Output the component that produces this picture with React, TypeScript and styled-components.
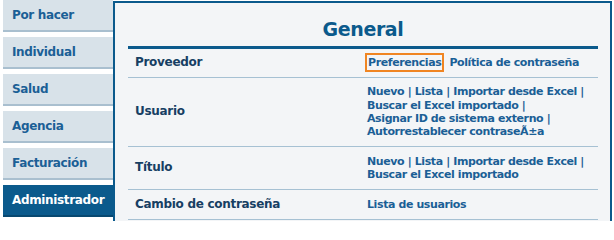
import styled, { createGlobalStyle } from 'styled-components';

const colors = {
  blue: '#1b5f96',
  navy: '#0b5a8c',
  tabBg: '#d8e2e9',
  tabEdge: '#a9bfcf',
  panelBg: '#f3f5f7',
  line: '#a6c1d3',
  focus: '#f08522',
};

const tabs = ['Por hacer', 'Individual', 'Salud', 'Agencia', 'Facturación', 'Administrador'];
const activeTab = 'Administrador';

interface Section {
  label: string;
  height: number;
  links: string[];
}

const sections: Section[] = [
  {
    label: 'Usuario',
    height: 68,
    links: [
      'Nuevo | Lista | Importar desde Excel |',
      'Buscar el Excel importado |',
      'Asignar ID de sistema externo |',
      'Autorrestablecer contraseÃ±a',
    ],
  },
  {
    label: 'Título',
    height: 42,
    links: ['Nuevo | Lista | Importar desde Excel |', 'Buscar el Excel importado'],
  },
  { label: 'Cambio de contraseña', height: 29, links: ['Lista de usuarios'] },
];

const GlobalStyle = createGlobalStyle`
  html, body {
    margin: 0;
    padding: 0;
    background: #ffffff;
  }
  body {
    font-family: "DejaVu Sans", Verdana, sans-serif;
    font-weight: bold;
  }
`;

export default function App() {
  return (
    <>
      <GlobalStyle />
      <Page>
        <Nav>
          {tabs.map((t) => (
            <Tab key={t} $active={t === activeTab}>
              {t}
            </Tab>
          ))}
        </Nav>
        <Panel>
          <Title>General</Title>
          <Table>
            <tbody>
              <Row>
                <Label $h={28}>Proveedor</Label>
                <Links>
                  <Focused>Preferencias</Focused>
                  <span>Política de contraseña</span>
                </Links>
              </Row>
              {sections.map((s) => (
                <Row key={s.label}>
                  <Label $h={s.height}>{s.label}</Label>
                  <Links>
                    {s.links.map((line, i) => (
                      <div key={i}>{line}</div>
                    ))}
                  </Links>
                </Row>
              ))}
            </tbody>
          </Table>
        </Panel>
      </Page>
    </>
  );
}

const Page = styled.div`
  display: flex;
  flex-direction: row;
  width: 614px;
  height: 221px;
  overflow: hidden;
`;

const Nav = styled.div`
  display: flex;
  flex-direction: column;
  width: 110px;
  padding-left: 3px;
  gap: 5px;
  flex-shrink: 0;
`;

const Tab = styled.div<{ $active?: boolean }>`
  height: 30px;
  line-height: 30px;
  padding-left: 9px;
  font-size: 12px;
  letter-spacing: -0.35px;
  white-space: nowrap;
  color: ${(p) => (p.$active ? '#ffffff' : colors.blue)};
  background: ${(p) => (p.$active ? colors.navy : colors.tabBg)};
  border-bottom: 2px solid ${(p) => (p.$active ? '#084870' : colors.tabEdge)};
`;

const Panel = styled.div`
  width: 499px;
  height: 240px;
  margin-top: 1px;
  border: 2px solid ${colors.navy};
  background: ${colors.panelBg};
  padding: 0 12px 0 13px;
  box-sizing: border-box;
`;

const Title = styled.div`
  height: 43px;
  line-height: 52px;
  text-align: center;
  font-size: 19px;
  letter-spacing: -0.4px;
  color: ${colors.navy};
  border-bottom: 3px solid ${colors.navy};
`;

const Table = styled.table`
  width: 470px;
  border-collapse: collapse;
`;

const Row = styled.tr`
  border-bottom: 1px solid ${colors.line};
`;

const Label = styled.td<{ $h: number }>`
  width: 232px;
  height: ${(p) => p.$h}px;
  padding: 0 0 0 7px;
  font-size: 12px;
  line-height: 13.3px;
  letter-spacing: -0.3px;
  color: #173f63;
  vertical-align: middle;
`;

const Links = styled.td`
  padding: 0;
  font-size: 11px;
  line-height: 13.3px;
  letter-spacing: -0.4px;
  color: ${colors.blue};
  white-space: nowrap;
  vertical-align: middle;
`;

const Focused = styled.span`
  outline: 2px solid ${colors.focus};
  outline-offset: 1px;
  margin-right: 8px;
  margin-left: 1px;
`;
